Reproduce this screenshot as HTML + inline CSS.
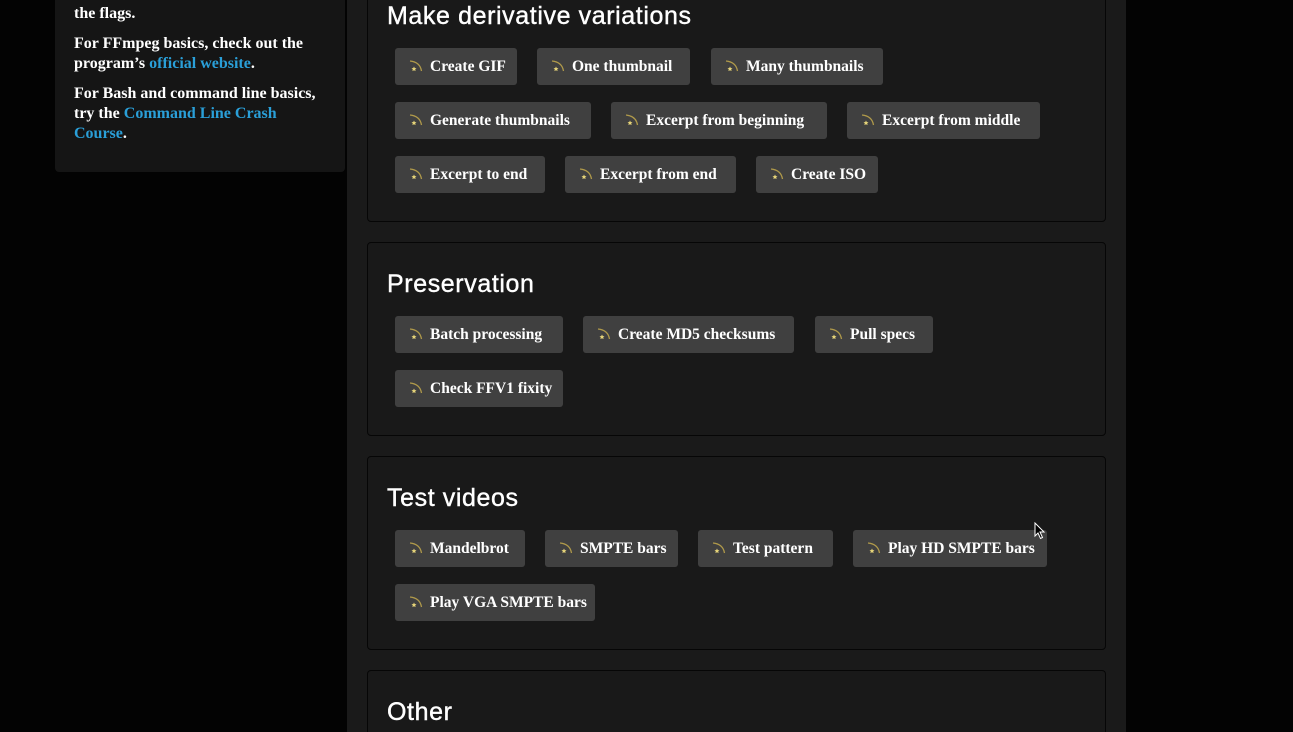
<!DOCTYPE html>
<html><head><meta charset="utf-8"><style>
*{margin:0;padding:0;box-sizing:border-box}
html,body{width:1293px;height:732px;overflow:hidden}
body{background:#030303;position:relative;font-family:"Liberation Serif",serif}
.side{position:absolute;left:55px;top:0;width:290px;height:172px;background:#151515;border-radius:0 0 4px 4px;padding:0 19px;color:#fff;font-size:16px;line-height:20px;font-weight:bold}
.side p{margin-bottom:10px;width:250px}
.side a{color:#2a9fd8;text-decoration:none}
.main{position:absolute;left:347px;top:0;width:779px;height:732px;background:#1a1a1a;overflow:hidden}
.card{position:absolute;left:20px;width:739px;border:1px solid #060606;border-radius:4px;background:#191919}
.card h2{position:absolute;left:19px;font-family:"Liberation Sans",sans-serif;font-weight:normal;font-size:25px;color:#fff;letter-spacing:0.6px;-webkit-text-stroke:0.4px #fff}
.b{position:absolute;height:37px;background:#404040;border-radius:3px;color:#fff;font-weight:bold;font-size:15.5px;line-height:38px;padding-left:35px;white-space:nowrap;overflow:hidden}
.b svg{position:absolute;left:14px;top:12px}
</style></head><body>
<div class="side">
<p style="padding-top:4px">the flags.</p>
<p>For FFmpeg basics, check out the program’s <a>official website</a>.</p>
<p>For Bash and command line basics, try the <a>Command Line Crash Course</a>.</p>
</div>
<div class="main">
<div class="card" style="top:-30px;height:252px"><h2 style="top:31px">Make derivative variations</h2></div>
<div class="card" style="top:242px;height:194px"><h2 style="top:27px">Preservation</h2></div>
<div class="card" style="top:456px;height:194px"><h2 style="top:27px">Test videos</h2></div>
<div class="card" style="top:670px;height:62px;border-bottom:none;border-radius:4px 4px 0 0"><h2 style="top:27px">Other</h2></div>
</div>
<div id="btns"></div>
<svg style="position:absolute;left:1034px;top:522px" width="12" height="18" viewBox="0 0 12 18"><path d="M1 1 L1 14 L4 11 L6.5 16.5 L8.5 15.5 L6 10 L10 10 Z" fill="#000" stroke="#fff" stroke-width="1"/></svg>
<script>
var ic='<svg width="14" height="12" viewBox="0 0 14 12"><path d="M1 1 Q11 2 12.5 11" fill="none" stroke="#b09a4a" stroke-width="1.3"/><path d="M5 6.5 l0.8 1.6 1.7.2-1.3 1.1.4 1.7-1.6-.9-1.6.9.4-1.7-1.3-1.1 1.7-.2z" fill="#e8d67a"/></svg>';
var B=[[395,517,48,"Create GIF"],[537,690,48,"One thumbnail"],[711,883,48,"Many thumbnails"],
[395,591,102,"Generate thumbnails"],[611,827,102,"Excerpt from beginning"],[847,1040,102,"Excerpt from middle"],
[395,545,156,"Excerpt to end"],[565,736,156,"Excerpt from end"],[756,878,156,"Create ISO"],
[395,563,316,"Batch processing"],[583,794,316,"Create MD5 checksums"],[815,933,316,"Pull specs"],
[395,563,370,"Check FFV1 fixity"],
[395,525,530,"Mandelbrot"],[545,678,530,"SMPTE bars"],[698,833,530,"Test pattern"],[853,1047,530,"Play HD SMPTE bars"],
[395,595,584,"Play VGA SMPTE bars"]];
var h='';B.forEach(function(b){h+='<div class="b" style="left:'+b[0]+'px;top:'+b[2]+'px;width:'+(b[1]-b[0])+'px">'+ic+b[3]+'</div>'});
document.getElementById('btns').innerHTML=h;
</script>
</body></html>
